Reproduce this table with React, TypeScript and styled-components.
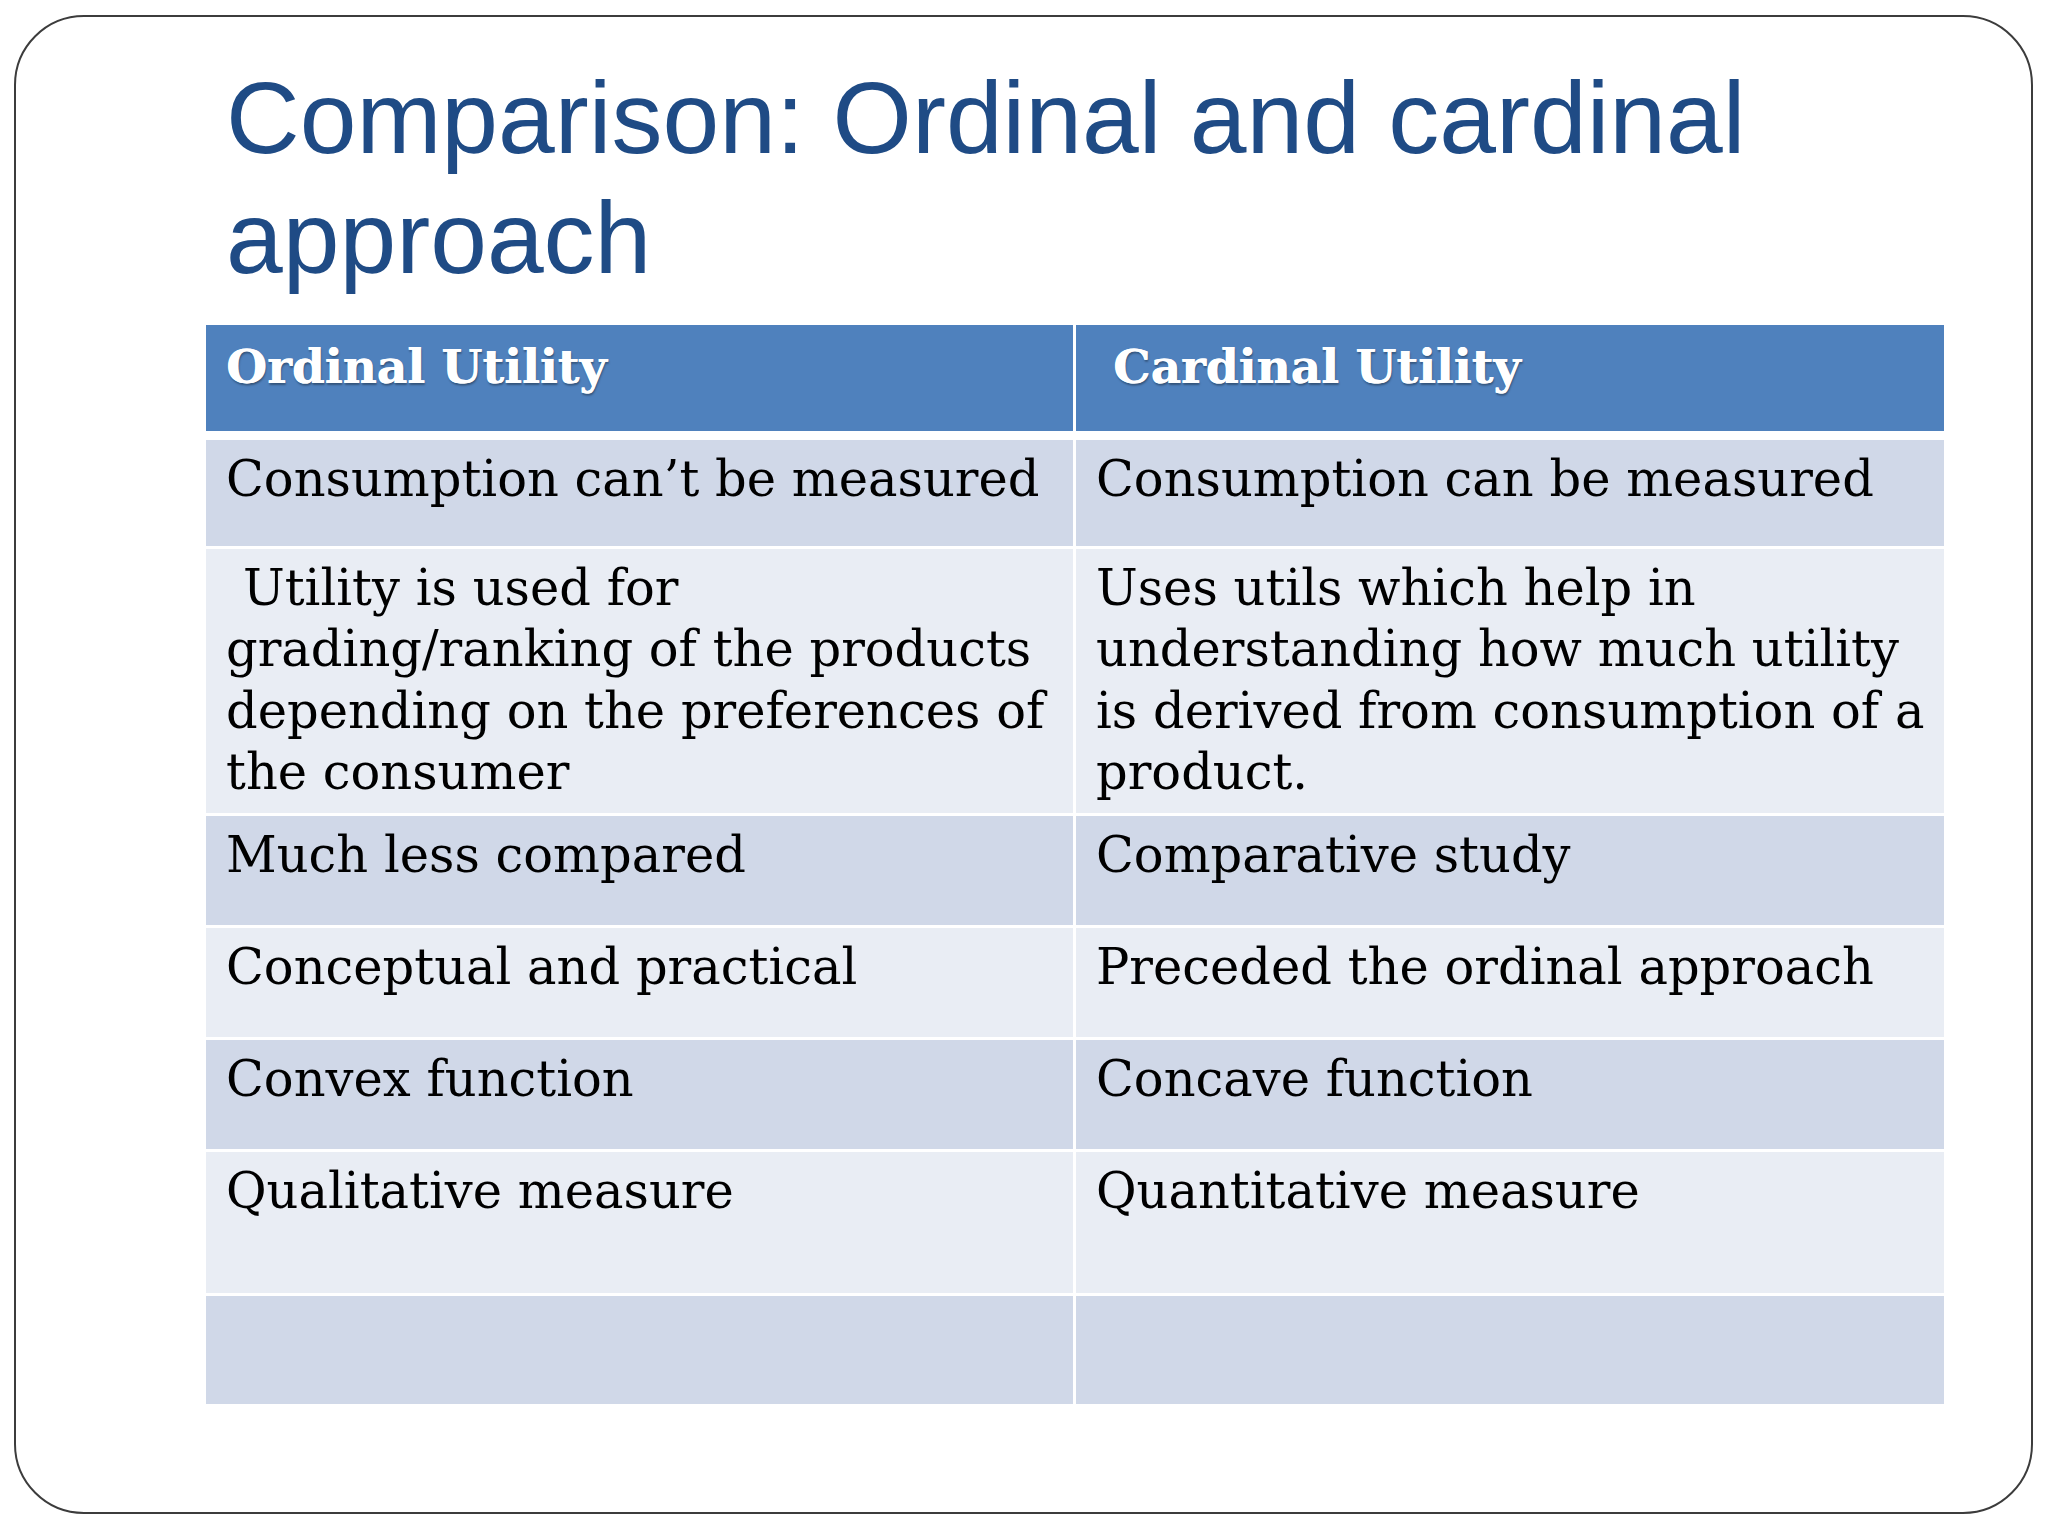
import React from "react";
import styled, { createGlobalStyle } from "styled-components";

const Global = createGlobalStyle`
  html, body { margin: 0; padding: 0; background: #ffffff; }
  body { width: 2048px; height: 1536px; overflow: hidden; }
`;

const Slide = styled.div`
  box-sizing: border-box;
  margin: 15px 0 0 14px;
  width: 2019px;
  height: 1499px;
  border: 2px solid #3c3c3c;
  border-radius: 70px;
  background: #ffffff;
  padding: 41px 0 0 190px;
  display: flex;
  flex-direction: column;
`;

const Title = styled.h1`
  margin: 0 0 27px 20px;
  font-family: "Liberation Sans", Arial, sans-serif;
  font-weight: 400;
  font-size: 102px;
  line-height: 120px;
  color: #1f4b85;
  letter-spacing: 0;
`;

const Grid = styled.div`
  display: grid;
  grid-template-columns: 867px 868px;
  column-gap: 3px;
  row-gap: 3px;
  background: #ffffff;
`;

const HeadCell = styled.div<{ $indent?: number }>`
  box-sizing: border-box;
  height: 106px;
  margin-bottom: 6px;
  background: #4f81bd;
  padding: 13px 20px 0 ${(p) => 20 + (p.$indent ?? 0)}px;
  font-family: "DejaVu Serif", "Liberation Serif", serif;
  font-weight: 700;
  font-size: 47px;
  line-height: 57px;
  color: #ffffff;
  text-shadow: 0.6px 0 0 #ffffff, 1px 2px 2px rgba(0, 0, 0, 0.35);
  white-space: nowrap;
`;

const Cell = styled.div<{ $shade: "dark" | "light"; $h: number; $indent?: number }>`
  box-sizing: border-box;
  height: ${(p) => p.$h}px;
  background: ${(p) => (p.$shade === "dark" ? "#d0d8e8" : "#e9edf4")};
  padding: 9px 20px 0 ${(p) => 20 + (p.$indent ?? 0)}px;
  font-family: "DejaVu Serif", "Liberation Serif", serif;
  font-size: 49.5px;
  line-height: 61.4px;
  color: #000000;
  white-space: nowrap;
`;

const Outdent = styled.span`
  margin-left: -17px;
`;

type Row = { h: number; left: React.ReactNode; right: React.ReactNode; leftIndent?: number };

const rows: Row[] = [
  { h: 106, left: "Consumption can’t be measured", right: "Consumption can be measured" },
  {
    h: 264,
    leftIndent: 17,
    left: (
      <>
        Utility is used for
        <br />
        <Outdent>grading/ranking of the products</Outdent>
        <br />
        <Outdent>depending on the preferences of</Outdent>
        <br />
        <Outdent>the consumer</Outdent>
      </>
    ),
    right: (
      <>
        Uses utils which help in
        <br />
        understanding how much utility
        <br />
        is derived from consumption of a
        <br />
        product.
      </>
    ),
  },
  { h: 109, left: "Much less compared", right: "Comparative study" },
  { h: 109, left: "Conceptual and practical", right: "Preceded the ordinal approach" },
  { h: 109, left: "Convex function", right: "Concave function" },
  { h: 141, left: "Qualitative measure", right: "Quantitative measure" },
  { h: 108, left: "", right: "" },
];

export default function App() {
  return (
    <>
      <Global />
      <Slide>
        <Title>
          Comparison: Ordinal and cardinal
          <br />
          approach
        </Title>
        <Grid>
          <HeadCell>Ordinal Utility</HeadCell>
          <HeadCell $indent={17}>Cardinal Utility</HeadCell>
          {rows.map((r, i) => {
            const shade = i % 2 === 0 ? "dark" : "light";
            return (
              <React.Fragment key={i}>
                <Cell $shade={shade} $h={r.h} $indent={r.leftIndent}>
                  {r.left}
                </Cell>
                <Cell $shade={shade} $h={r.h}>
                  {r.right}
                </Cell>
              </React.Fragment>
            );
          })}
        </Grid>
      </Slide>
    </>
  );
}
